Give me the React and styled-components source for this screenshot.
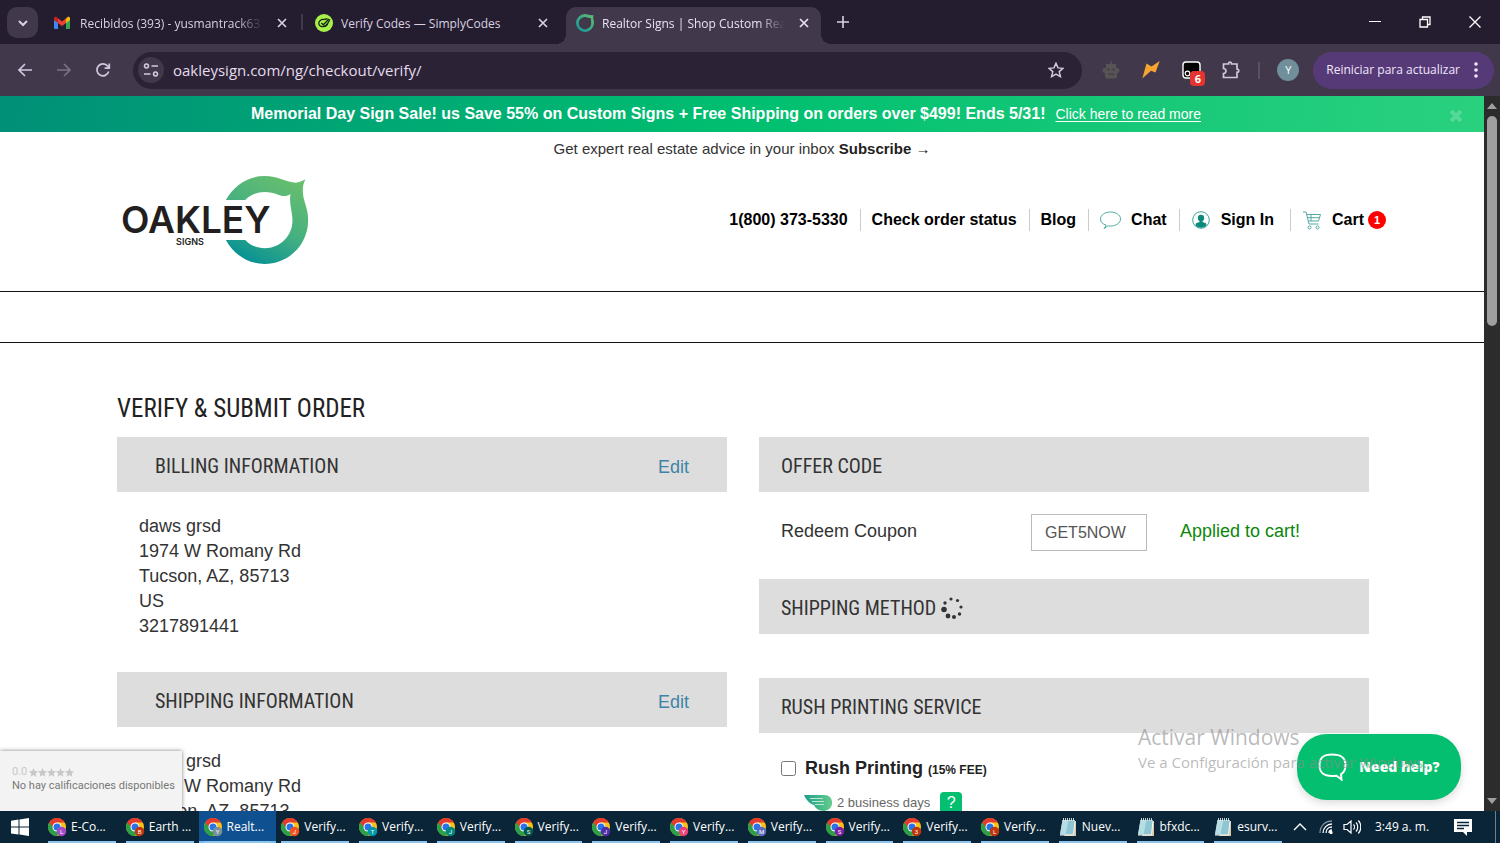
import React from "react";
import styled, { createGlobalStyle, css } from "styled-components";

const GlobalStyle = createGlobalStyle`
  *, *::before, *::after { box-sizing: border-box; }
  body { margin: 0; font-family: "Liberation Sans", Arial, sans-serif; }
  button { font: inherit; color: inherit; background: none; border: 0; padding: 0; cursor: pointer; }
  h1, h2, p { margin: 0; font-weight: 400; }
  svg { display: block; flex: none; }
`;

const uiFont = `"Open Sans", "Noto Sans", sans-serif`;
const narrowFont = `"Roboto Condensed", "Arial Narrow", "Liberation Sans", sans-serif`;

const Desktop = styled.div`
  position: relative;
  height: 100vh;
  display: flex;
  flex-direction: column;
  overflow: hidden;
`;

/* ---------- browser chrome ---------- */

const TabStrip = styled.div`
  flex: none;
  display: flex;
  align-items: flex-end;
  height: 44px;
  padding-left: 7px;
  background: #241d2f;
  color: #d9d0e2;
  font: 12px/18px ${uiFont};
`;

const TabSearch = styled.button`
  width: 31px;
  height: 31px;
  margin: 0 6px 6px 0;
  display: grid;
  place-items: center;
  border-radius: 10px;
  background: #41384b;
`;

const Tab = styled.div`
  position: relative;
  width: 255px;
  height: 37px;
  margin-right: 6px;
  padding: 0 10px 5px;
  display: flex;
  align-items: center;
  gap: 8px;
  border-radius: 10px 10px 0 0;
  ${(p) => p.$active && css`
    background: #41384b;
    color: #eae2f2;
    &::before, &::after {
      content: "";
      position: absolute;
      bottom: 0;
      width: 10px;
      height: 10px;
    }
    &::before { left: -10px; background: radial-gradient(circle at 0 0, transparent 10px, #41384b 10px); }
    &::after { right: -10px; background: radial-gradient(circle at 100% 0, transparent 10px, #41384b 10px); }
  `}
  ${(p) => p.$divided && css`
    &::after {
      content: "";
      position: absolute;
      right: -4px;
      top: 7px;
      width: 2px;
      height: 16px;
      background: #41384b;
    }
  `}
`;

const TabTitle = styled.span`
  flex: 1;
  padding-top: 1px;
  overflow: hidden;
  white-space: nowrap;
  mask-image: ${(p) => (p.$fade ? "linear-gradient(to right, #000 85%, transparent)" : "none")};
`;

const CloseTab = styled.button`
  width: 14px;
  height: 14px;
  margin-left: 4px;
  display: grid;
  place-items: center;
`;

const NewTab = styled.button`
  width: 32px;
  height: 44px;
  display: grid;
  place-items: center;
`;

const WindowButtons = styled.div`
  display: flex;
  margin-left: auto;
`;

const WindowButton = styled.button`
  width: 50px;
  height: 44px;
  display: grid;
  place-items: center;
  color: #fff;
`;

const Toolbar = styled.div`
  flex: none;
  display: flex;
  align-items: center;
  height: 52px;
  padding: 0 6px 0 5px;
  background: #41384b;
  color: #d3c6df;
`;

const NavButton = styled.button`
  width: 39px;
  height: 36px;
  display: grid;
  place-items: center;
  opacity: ${(p) => (p.disabled ? 0.4 : 1)};
  color: inherit;
`;

const AddressBar = styled.div`
  flex: 1;
  height: 37px;
  margin-left: 11px;
  padding: 0 18px 0 5px;
  display: flex;
  align-items: center;
  gap: 9px;
  border-radius: 19px;
  background: #2b2236;
`;

const SiteInfo = styled.button`
  width: 26px;
  height: 26px;
  display: grid;
  place-items: center;
  border-radius: 50%;
  background: #41384b;
`;

const AddressInput = styled.input`
  flex: 1;
  min-width: 0;
  padding: 0;
  border: 0;
  outline: 0;
  background: transparent;
  color: #e5dcec;
  font: 15px/20px ${uiFont};
`;

const Extensions = styled.div`
  display: flex;
  align-items: center;
  margin-left: 9px;
  padding-right: 7px;
`;

const Extension = styled.button`
  position: relative;
  width: 40px;
  height: 36px;
  display: grid;
  place-items: center;
`;

const ExtensionCount = styled.span`
  position: absolute;
  right: 6px;
  bottom: 2px;
  width: 15px;
  height: 15px;
  border-radius: 4px;
  background: #e5332f;
  color: #fff;
  font: 700 11px/15px ${uiFont};
  text-align: center;
`;

const ToolbarDivider = styled.span`
  width: 2px;
  height: 17px;
  background: #5b5067;
`;

const Avatar = styled.button`
  width: 22px;
  height: 22px;
  margin: 0 14px 0 17px;
  border-radius: 50%;
  background: #708f9b;
  color: #fff;
  font: 11px/22px ${uiFont};
`;

const RestartButton = styled.button`
  height: 37px;
  padding: 0 16px 0 13px;
  display: flex;
  align-items: center;
  gap: 14px;
  border-radius: 19px;
  background: #563a78;
  color: #f1e6fb;
  font: 12px/18px ${uiFont};
  white-space: nowrap;
`;

/* ---------- web page ---------- */

const Viewport = styled.div`
  flex: 1;
  min-height: 0;
  display: flex;
  position: relative;
`;

const Page = styled.div`
  flex: 1;
  min-width: 0;
  position: relative;
  overflow: hidden;
  background: #fff;
  color: #333;
`;

const ScrollTrack = styled.div`
  width: 16px;
  padding: 7px 0;
  display: flex;
  flex-direction: column;
  align-items: center;
  background: #2c2c2c;
  color: #9f9f9f;
`;

const ScrollThumb = styled.div`
  width: 10px;
  height: 30%;
  margin: 7px 0 auto;
  border-radius: 5px;
  background: #9f9f9f;
`;

const Banner = styled.div`
  position: relative;
  height: 36px;
  display: flex;
  align-items: center;
  justify-content: center;
  gap: 10px;
  padding-right: 32px;
  background: linear-gradient(100deg, #008f78 0%, #00bf70 50%, #2ad17f 100%);
  color: #fff;
  font-size: 16px;
  white-space: nowrap;
`;

const BannerLink = styled.a`
  color: #fff;
  font-size: 14px;
  text-underline-offset: 2px;
`;

const BannerClose = styled.button`
  position: absolute;
  right: 22px;
  top: 14px;
  color: #55d998;
`;

const Subscribe = styled.p`
  padding-top: 7px;
  font-size: 15px;
  line-height: 20px;
  text-align: center;
`;

const PlainLink = styled.a`
  color: #222;
  text-decoration: none;
`;

const Header = styled.header`
  height: 133px;
  padding: 0 98px 0 120px;
  display: flex;
  align-items: center;
  justify-content: space-between;
  border-bottom: 1px solid #111;
`;

const HomeLink = styled.a`
  padding-bottom: 17px;
`;

const HeaderNav = styled.nav`
  display: flex;
  align-items: center;
  padding-bottom: 10px;
`;

const HeaderLink = styled.a`
  height: 22px;
  padding: 0 ${(p) => (p.$wide ? "16px" : "12px")} 0 11px;
  display: flex;
  align-items: center;
  gap: 10px;
  border-left: 1px solid #ccc;
  color: #000;
  font-size: 16px;
  font-weight: 700;
  text-decoration: none;
  white-space: nowrap;
  &:first-child { border-left: 0; }
  &:last-child { padding-right: 0; }
`;

const CartLabel = styled.span`
  display: flex;
  align-items: center;
  gap: 4px;
`;

const CartCount = styled.span`
  width: 18px;
  height: 18px;
  border-radius: 50%;
  background: #f00;
  color: #fff;
  font-size: 11px;
  line-height: 18px;
  text-align: center;
`;

const CategoryStrip = styled.div`
  height: 51px;
  border-bottom: 1px solid #111;
`;

const Main = styled.main`
  padding: 51px 115px 0 117px;
`;

const PageTitle = styled.h1`
  margin-bottom: 13px;
  color: #222;
  font: 25px/30px ${narrowFont};
`;

const Columns = styled.div`
  display: grid;
  grid-template-columns: 1fr 1fr;
  gap: 32px;
`;

const SectionBar = styled.div`
  height: 55px;
  padding: ${(p) => (p.$inset ? "15px 38px 0" : "15px 22px 0")};
  display: flex;
  align-items: baseline;
  background: #ddd;
`;

const SectionTitle = styled.h2`
  display: flex;
  align-items: center;
  gap: 5px;
  font: 20px/28px ${narrowFont};
`;

const EditLink = styled.a`
  margin-left: auto;
  color: #3f84a8;
  font-size: 18px;
  line-height: 25px;
  text-decoration: none;
`;

const Address = styled.address`
  padding: 22px 22px 33px;
  font-style: normal;
  font-size: 18px;
  line-height: 25px;
`;

const CouponRow = styled.div`
  height: 87px;
  padding: 22px 22px 0;
  display: flex;
  align-items: flex-start;
  font-size: 18px;
  line-height: 34px;
`;

const CouponLabel = styled.label`
  width: 250px;
`;

const CouponInput = styled.input`
  width: 116px;
  height: 37px;
  margin-right: 33px;
  padding: 0 13px;
  border: 1px solid #bbb;
  color: #555;
  font: 16px "Liberation Sans", Arial, sans-serif;
`;

const Applied = styled.span`
  color: #0b870b;
`;

const Spacer = styled.div`
  height: 44px;
`;

const RushBlock = styled.div`
  padding: 23px 22px 0;
`;

const RushOption = styled.label`
  display: flex;
  align-items: baseline;
  gap: 5px;
  color: #222;
  font-size: 18px;
  font-weight: 700;
  line-height: 25px;
`;

const Checkbox = styled.input`
  align-self: center;
  width: 15px;
  height: 15px;
  margin: 0 4px 2px 0;
`;

const Fee = styled.span`
  font-size: 12px;
`;

const RushTime = styled.div`
  padding: 9px 0 0 23px;
  display: flex;
  align-items: center;
  gap: 5px;
  color: #666;
  font-size: 13px;
  line-height: 22px;
`;

const HelpTip = styled.button`
  width: 22px;
  height: 22px;
  margin-left: 5px;
  border-radius: 4px;
  background: #04bf6f;
  color: #fff;
  font-size: 16px;
  line-height: 22px;
`;

const HelpButton = styled.button`
  position: absolute;
  right: 23px;
  bottom: 11px;
  width: 164px;
  height: 66px;
  display: flex;
  align-items: center;
  justify-content: center;
  gap: 12px;
  border-radius: 30px;
  background: #04bf6f;
  box-shadow: 0 3px 8px rgba(0, 0, 0, 0.15);
  color: #fff;
  font: 800 14px/20px "Open Sans", sans-serif;
`;

const RatingCard = styled.div`
  position: absolute;
  left: 0;
  bottom: 0;
  height: 60px;
  padding: 14px 7px 0 12px;
  background: #f3f3f3;
  box-shadow: 0 0 4px rgba(0, 0, 0, 0.5);
  color: #777;
  font: 11px/14px Roboto, sans-serif;
  white-space: nowrap;
`;

const Score = styled.div`
  color: #c8c8c8;
  display: flex;
  align-items: center;
  gap: 2px;
`;

const Stars = styled.span`
  display: flex;
`;

const Watermark = styled.div`
  position: absolute;
  right: 73px;
  bottom: 70px;
  color: rgba(140, 140, 140, 0.6);
  font: 15px/22px ${uiFont};
  pointer-events: none;
`;

const WatermarkTitle = styled.div`
  font-size: 21px;
  line-height: 28px;
`;

/* ---------- task bar ---------- */

const TaskBar = styled.footer`
  flex: none;
  display: flex;
  height: 32px;
  background: #0a2538;
  color: #fff;
  font: 12px/18px ${uiFont};
`;

const StartButton = styled.button`
  width: 43px;
  padding-right: 3px;
  display: grid;
  place-items: center;
`;

const TaskList = styled.div`
  flex: 1;
  min-width: 0;
  display: flex;
`;

const Task = styled.button`
  flex: 1 1 0;
  min-width: 0;
  padding: 0 5px;
  display: flex;
  background: ${(p) => (p.$active ? "#0f5190" : "none")};
  box-shadow: ${(p) => (p.$active ? "inset 0 -2px #76b9ed" : "none")};
`;

const TaskInner = styled.span`
  flex: 1;
  min-width: 0;
  height: 32px;
  padding-top: 2px;
  display: flex;
  align-items: center;
  gap: 4px;
  border-bottom: 2px solid #8cc4ee;
  white-space: nowrap;
`;

const Tray = styled.div`
  width: 213px;
  display: flex;
  align-items: center;
`;

const TrayButton = styled.button`
  width: 26px;
  height: 32px;
  display: grid;
  place-items: center;
`;

const Clock = styled.span`
  width: 68px;
  padding-left: 10px;
  white-space: nowrap;
`;

const Notifications = styled.button`
  width: 48px;
  height: 32px;
  margin-left: 6px;
  display: grid;
  place-items: center;
`;

const ShowDesktop = styled.button`
  width: 5px;
  height: 32px;
  margin-left: auto;
  border-left: 1px solid #6c8090;
`;

/* ---------- drawings ---------- */

const Line = ({ size = 16, w = 2, d, box = 16, ...rest }) => (
  <svg width={size} height={size} viewBox={`0 0 ${box} ${box}`} fill="none" stroke="currentColor" strokeWidth={w} {...rest}>
    <path d={d} />
  </svg>
);

const Cross = () => <Line size={10} box={10} w={1.7} d="M1 1l8 8M9 1l-8 8" />;

const GmailIcon = () => (
  <svg width="18" height="18" viewBox="0 0 18 18">
    <path d="M0 4v10a1 1 0 0 0 1 1h3V7z" fill="#4285f4" />
    <path d="M12 7v8h3a1 1 0 0 0 1-1V4z" fill="#34a853" />
    <path d="M12 4.500V9l4-3V4.500c0-1.700-1.700-2.200-2.800-1.300z" fill="#fbbc04" />
    <path d="M4 9V4.300L8 7.400l4-3.100V9l-4 3z" fill="#ea4335" />
    <path d="M0 4.500V6l4 3V4.300L2.800 3.200C1.700 2.300 0 2.800 0 4.500z" fill="#c5221f" />
  </svg>
);

const SimplyIcon = () => (
  <svg width="18" height="18" viewBox="0 0 18 18">
    <circle cx="9" cy="9" r="9" fill="#a8f04a" />
    <g fill="none" stroke="#15240f" strokeWidth="1.300">
      <path d="M9.500 5.500C6 5 3.500 7 3.800 9.800c.3 2.700 3.600 3.500 5.700 2.400 2.300-1.200 4.200-3.800 5.300-6.800" />
      <path d="M6.300 9l2 1.800L14 5M9.500 5.500l3-.8M12.600 9.500c-.3 1.500-1.800 2.700-3.300 3" />
    </g>
  </svg>
);

const ringPath =
  "M378 120C402 76 446 48 494 48C535 48 560 68 588 68C598 68 607 63 617 58C609 73 607 88 611 112C616 135 625 150 625 181C625 254 567 312 494 312C446 312 402 285 378 240H436C451 256 472 265 494 265C541 265 578 228 578 181C578 155 567 132 572 102C560 111 548 109 535 104C522 99 510 96 494 96C472 96 451 105 436 120Z";

const OakleyLogo = () => (
  <svg width="190" height="94" viewBox="0 0 190 94" role="img" aria-label="Oakley Signs">
    <defs>
      <linearGradient id="leaf" x1="0.200" y1="1" x2="0.700" y2="0">
        <stop offset="0" stopColor="#008e96" />
        <stop offset="0.500" stopColor="#45b080" />
        <stop offset="1" stopColor="#66be6e" />
      </linearGradient>
    </defs>
    <path d={ringPath} transform="scale(0.333) translate(-60 -30)" fill="url(#leaf)" />
    <text x="1" y="63" fontFamily="Inter" fontWeight="600" fontSize="37" fill="#231f20">OAKLEY</text>
    <text x="70" y="75" textAnchor="middle" fontFamily="Inter" fontWeight="600" fontSize="9" fill="#231f20">SIGNS</text>
  </svg>
);

const OakleyIcon = () => (
  <svg width="18" height="18" viewBox="0 0 18 18">
    <defs>
      <linearGradient id="ring" x1="0" y1="1" x2="1" y2="0">
        <stop offset="0" stopColor="#0d95a0" />
        <stop offset="1" stopColor="#66be6e" />
      </linearGradient>
    </defs>
    <path
      d="M9 0c3 0 5 2 8.500 1-1 3 .5 5 .5 8a9 9 0 1 1-9-9zm0 3a6.200 6.200 0 1 0 6.200 6.200c0-2-.5-3.500-.4-5.200C12.500 4.300 11 3 9 3z"
      fill="url(#ring)"
      fillRule="evenodd"
    />
  </svg>
);

const ChromeIcon = ({ color, letter }) => (
  <svg width="19" height="19" viewBox="0 0 19 19">
    <circle cx="9" cy="9" r="9" fill="#fbc116" />
    <path d="M9 9L1.200 4.500A9 9 0 0 0 9 18l4-6.700z" fill="#2c9f48" />
    <path d="M9 9H5L1.200 4.500a9 9 0 0 1 15.600 0H9z" fill="#e33b2e" />
    <circle cx="9" cy="9" r="4.500" fill="#fff" />
    <circle cx="9" cy="9" r="3.500" fill="#2a72e8" />
    <circle cx="13.500" cy="13.500" r="4.700" fill={color} />
    <text x="13.500" y="16" textAnchor="middle" fontSize="6" fontFamily="Roboto" fill="#fff">{letter}</text>
  </svg>
);

const NotepadIcon = () => (
  <svg width="19" height="19" viewBox="0 0 19 19">
    <path d="M14 3h3v15H5z" fill="#d8c9a4" />
    <path d="M3.500 2H16l-1.500 14.500H1z" fill="#8fc6d4" />
    <path d="M3.500 2h6L6.500 16.500H1z" fill="#b7dde5" />
    <path d="M4.500 0v3M6.500 0v3M8.500 0v3M10.500 0v3M12.500 0v3M14.500 0v3" stroke="#dfe9ec" strokeWidth="0.900" />
    <path d="M1 17h13.500L16 3.500" fill="none" stroke="#f4f7f7" />
  </svg>
);

const WindowsLogo = () => (
  <svg width="18" height="18" viewBox="0 0 18 18" fill="#fff">
    <path d="M0 2.700L7.500 1.600v7H0zM8.500 1.500L18 0v8.600H8.500zM0 9.500h7.500v7L0 15.400zM8.500 9.500H18V18l-9.500-1.400z" />
  </svg>
);

const Spinner = () => (
  <svg width="22" height="22" viewBox="0 0 22 22" fill="#333">
    <circle cx="10" cy="2" r="1.600" />
    <circle cx="16.500" cy="3.500" r="1.600" />
    <circle cx="20" cy="10" r="1.600" />
    <circle cx="18.500" cy="17" r="1.700" />
    <circle cx="13" cy="20" r="2" />
    <circle cx="7" cy="19" r="2.400" />
    <circle cx="3" cy="12.500" r="2.800" />
    <circle cx="4" cy="6" r="1.700" />
  </svg>
);

const Wing = () => (
  <svg width="28" height="18" viewBox="0 0 28 18">
    <defs>
      <linearGradient id="wing" x1="0" x2="1">
        <stop offset="0" stopColor="#1c9f8c" />
        <stop offset="1" stopColor="#66cc8c" />
      </linearGradient>
    </defs>
    <path d="M0 1h20c5 0 8 3 8 7a8 8 0 0 1-8 9c-5 0-9-3-10-6C6 10 2 6 0 1z" fill="url(#wing)" />
    <path d="M6 4.500h13M8 7.500h12M11 10.500h9" stroke="#b9ead1" />
  </svg>
);

const chromeTasks = [
  ["E-Co...", "#a64ac9", "L"],
  ["Earth ...", "#bf360c", "B"],
  ["Realt...", "#78909c", "Y"],
  ["Verify...", "#f4511e", "J"],
  ["Verify...", "#0097a7", "T"],
  ["Verify...", "#00897b", "J"],
  ["Verify...", "#00574b", "S"],
  ["Verify...", "#512da8", "J"],
  ["Verify...", "#ec407a", "Y"],
  ["Verify...", "#5c6bc0", "M"],
  ["Verify...", "#7b1fa2", "S"],
  ["Verify...", "#bf360c", "3"],
  ["Verify...", "#bf360c", "L"],
];

const noteTasks = ["Nuev...", "bfxdc...", "esurv..."];

function BrowserTabs() {
  return (
    <TabStrip>
      <TabSearch aria-label="Buscar pestañas">
        <Line size={10} box={10} w={2} d="M1 3l4 4 4-4" />
      </TabSearch>
      <Tab $divided>
        <GmailIcon />
        <TabTitle $fade>Recibidos (393) - yusmantrack63</TabTitle>
        <CloseTab aria-label="Cerrar"><Cross /></CloseTab>
      </Tab>
      <Tab>
        <SimplyIcon />
        <TabTitle>Verify Codes — SimplyCodes</TabTitle>
        <CloseTab aria-label="Cerrar"><Cross /></CloseTab>
      </Tab>
      <Tab $active>
        <OakleyIcon />
        <TabTitle $fade>Realtor Signs | Shop Custom Real</TabTitle>
        <CloseTab aria-label="Cerrar"><Cross /></CloseTab>
      </Tab>
      <NewTab aria-label="Nueva pestaña"><Line size={12} box={12} w={1.6} d="M6 0v12M0 6h12" /></NewTab>
      <WindowButtons>
        <WindowButton aria-label="Minimizar"><Line size={12} box={12} w={1} d="M0 5.500h12" /></WindowButton>
        <WindowButton aria-label="Restaurar"><Line size={12} box={12} w={1.300} d="M1 3.500h7.500V11H1zM3.500 3.500V1H11v7.500H8.500" /></WindowButton>
        <WindowButton aria-label="Cerrar ventana"><Line size={12} box={12} w={1.300} d="M.5.5l11 11M11.500.5l-11 11" /></WindowButton>
      </WindowButtons>
    </TabStrip>
  );
}

function BrowserToolbar() {
  return (
    <Toolbar>
      <NavButton aria-label="Atrás"><Line d="M15 8H2M8 2L2 8l6 6" w={1.700} /></NavButton>
      <NavButton aria-label="Adelante" disabled><Line d="M1 8h13M8 2l6 6-6 6" w={1.700} /></NavButton>
      <NavButton aria-label="Recargar"><Line d="M13.700 9.500A6 6 0 1 1 12.800 4.300L14.200 6M14.300 1.500V6.200H9.600" w={1.700} /></NavButton>
      <AddressBar>
        <SiteInfo aria-label="Información del sitio">
          <Line w={1.600} d="M8.500 4H15M1 12h6.500M3.500 2a2 2 0 1 0 .01 0zM12.500 10a2 2 0 1 0 .01 0z" />
        </SiteInfo>
        <AddressInput aria-label="Dirección" defaultValue="oakleysign.com/ng/checkout/verify/" />
        <Line w={1.500} d="M8 1.200l2 4.700 5 .4-3.800 3.300 1.200 5L8 12l-4.400 2.600 1.200-5L1 6.300l5-.4z" />
      </AddressBar>
      <Extensions>
        <Extension aria-label="Robot">
          <svg width="18" height="18" viewBox="0 0 18 18" fill="#585455">
            <path d="M8.300 0h1.400v3H14v4h1a2.500 2.500 0 0 1 0 5v3.500a2 2 0 0 1-2 2H5a2 2 0 0 1-2-2V12a2.500 2.500 0 0 1 0-5h1V3h4.300z" />
            <path d="M5.500 7.500h2v2h-2zM10.500 7.500h2v2h-2zM6 12.500h6v1.200H6z" fill="#41384b" />
          </svg>
        </Extension>
        <Extension aria-label="Rayo">
          <svg width="18" height="18" viewBox="0 0 18 18" fill="#f7a531">
            <path d="M4.500 2.500l5 3L17.700 0l-4.200 11.500L9 9.800.3 17.500z" />
          </svg>
        </Extension>
        <Extension aria-label="Monitor">
          <svg width="19" height="18" viewBox="0 0 19 18">
            <rect x="1" y="1" width="17" height="16" rx="3" fill="#000" stroke="#fff" strokeWidth="1.400" />
            <circle cx="5.500" cy="12.500" r="2.300" fill="none" stroke="#fff" strokeWidth="1.200" />
          </svg>
          <ExtensionCount>6</ExtensionCount>
        </Extension>
        <Extension aria-label="Extensiones">
          <Line size={18} box={18} w={1.700} d="M1.500 3h5c-.3-2.500 3.300-2.500 3 0H15v5c2.300 0 2.300 3.300 0 3.300V16.500H1.500v-4c3.300 0 3.300-5 0-5z" />
        </Extension>
      </Extensions>
      <ToolbarDivider />
      <Avatar>Y</Avatar>
      <RestartButton>
        Reiniciar para actualizar
        <svg width="4" height="16" viewBox="0 0 4 16" fill="currentColor">
          <circle cx="2" cy="2" r="1.800" /><circle cx="2" cy="8" r="1.800" /><circle cx="2" cy="14" r="1.800" />
        </svg>
      </RestartButton>
    </Toolbar>
  );
}

function SiteHeader() {
  return (
    <>
      <Banner>
        <strong>Memorial Day Sign Sale! us Save 55% on Custom Signs + Free Shipping on orders over $499! Ends 5/31!</strong>
        <BannerLink href="#sale">Click here to read more</BannerLink>
        <BannerClose aria-label="Close"><Line size={12} box={12} w={4} d="M1 1l10 10M11 1L1 11" /></BannerClose>
      </Banner>
      <Subscribe>
        Get expert real estate advice in your inbox{" "}
        <PlainLink href="#subscribe"><b>Subscribe</b> →</PlainLink>
      </Subscribe>
      <Header>
        <HomeLink href="#home"><OakleyLogo /></HomeLink>
        <HeaderNav>
          <HeaderLink href="#call">1(800) 373-5330</HeaderLink>
          <HeaderLink href="#status">Check order status</HeaderLink>
          <HeaderLink href="#blog">Blog</HeaderLink>
          <HeaderLink href="#chat">
            <svg width="21" height="18" viewBox="0 0 21 18" fill="none" stroke="#3fa396" strokeWidth="0.900">
              <path d="M6 14C2.500 13 .5 11 .5 8.200.5 4 5 1 10.500 1s10 3 10 7-4.500 7-10 7c-1 0-1.500 0-2.300-.2L4 17.500c1-1 1.800-2 2-3.500z" />
            </svg>
            Chat
          </HeaderLink>
          <HeaderLink href="#signin" $wide>
            <svg width="20" height="18" viewBox="0 0 20 18">
              <circle cx="10" cy="9" r="8.300" fill="#fff" stroke="#3fa396" />
              <circle cx="10" cy="7" r="3.200" fill="#0c8a7b" />
              <path d="M8.500 9h3v2l3.500 1.200c.5.800.5 1.600.3 2.300-3 3-7.600 3-10.600 0-.2-.7-.2-1.500.3-2.300L8.500 11z" fill="#0c8a7b" />
            </svg>
            Sign In
          </HeaderLink>
          <HeaderLink href="#cart">
            <svg width="20" height="19" viewBox="0 0 20 19" fill="none" stroke="#3fa396" strokeWidth="0.900">
              <path d="M1 1h3l3 12h9.500M4.600 3.500H18.500L16.500 10H6.300M5.500 6.700h12M9 3.500V10" />
              <circle cx="7.500" cy="16.500" r="1.500" /><circle cx="15.500" cy="16.500" r="1.500" />
            </svg>
            <CartLabel>Cart <CartCount>1</CartCount></CartLabel>
          </HeaderLink>
        </HeaderNav>
      </Header>
      <CategoryStrip />
    </>
  );
}

function AddressSection({ title }) {
  return (
    <section>
      <SectionBar $inset>
        <SectionTitle>{title}</SectionTitle>
        <EditLink href="#edit">Edit</EditLink>
      </SectionBar>
      <Address>
        daws grsd<br />1974 W Romany Rd<br />Tucson, AZ, 85713<br />US<br />3217891441
      </Address>
    </section>
  );
}

function Checkout() {
  return (
    <Main>
      <PageTitle>VERIFY &amp; SUBMIT ORDER</PageTitle>
      <Columns>
        <div>
          <AddressSection title="BILLING INFORMATION" />
          <AddressSection title="SHIPPING INFORMATION" />
        </div>
        <div>
          <SectionBar><SectionTitle>OFFER CODE</SectionTitle></SectionBar>
          <CouponRow>
            <CouponLabel htmlFor="coupon">Redeem Coupon</CouponLabel>
            <CouponInput id="coupon" defaultValue="GET5NOW" />
            <Applied>Applied to cart!</Applied>
          </CouponRow>
          <SectionBar><SectionTitle>SHIPPING METHOD<Spinner /></SectionTitle></SectionBar>
          <Spacer />
          <SectionBar><SectionTitle>RUSH PRINTING SERVICE</SectionTitle></SectionBar>
          <RushBlock>
            <RushOption>
              <Checkbox type="checkbox" />
              Rush Printing <Fee>(15% FEE)</Fee>
            </RushOption>
            <RushTime>
              <Wing />
              2 business days
              <HelpTip>?</HelpTip>
            </RushTime>
          </RushBlock>
        </div>
      </Columns>
    </Main>
  );
}

function TaskBarRow() {
  return (
    <TaskBar>
      <StartButton aria-label="Inicio"><WindowsLogo /></StartButton>
      <TaskList>
        {chromeTasks.map(([name, color, letter], i) => (
          <Task key={i} $active={i === 2}>
            <TaskInner><ChromeIcon color={color} letter={letter} />{name}</TaskInner>
          </Task>
        ))}
        {noteTasks.map((name) => (
          <Task key={name}><TaskInner><NotepadIcon />{name}</TaskInner></Task>
        ))}
      </TaskList>
      <Tray>
        <TrayButton aria-label="Mostrar iconos ocultos"><Line size={14} box={14} w={1.400} d="M1 10l6-6 6 6" /></TrayButton>
        <TrayButton aria-label="Red">
          <svg width="14" height="14" viewBox="0 0 14 14" fill="none" stroke="#fff" strokeWidth="1.300">
            <path d="M1 13C1 6 6 1 13 1" opacity="0.500" /><path d="M4 13c0-5 4-9 9-9M7 13c0-3.500 2.500-6 6-6M10 13c0-2 1-3 3-3" />
            <circle cx="12" cy="12.500" r="1" fill="#fff" />
          </svg>
        </TrayButton>
        <TrayButton aria-label="Volumen">
          <Line size={18} box={18} w={1.200} d="M1 6.500h3L8 3v12l-4-3.500H1zM10.500 6.500c1.300 1.300 1.300 3.700 0 5M13 4.500c2.300 2.300 2.300 6.700 0 9M15.300 2.500c3.300 3.300 3.300 9.700 0 13" />
        </TrayButton>
        <Clock>3:49 a. m.</Clock>
        <Notifications aria-label="Notificaciones">
          <svg width="18" height="17" viewBox="0 0 18 17">
            <path d="M0 0h18v13h-5v4l-4-4H0z" fill="#fff" />
            <path d="M3 3.500h12M3 6.500h12M3 9.500h7" stroke="#0a2538" strokeWidth="1.300" />
          </svg>
        </Notifications>
        <ShowDesktop aria-label="Mostrar escritorio" />
      </Tray>
    </TaskBar>
  );
}

const star = "M5 0l1.500 3.300 3.500.4-2.600 2.400.7 3.600L5 7.900 1.900 9.700l.7-3.600L0 3.700l3.500-.4z";

export default function App() {
  return (
    <Desktop>
      <GlobalStyle />
      <BrowserTabs />
      <BrowserToolbar />
      <Viewport>
        <Page>
          <SiteHeader />
          <Checkout />
          <RatingCard>
            <Score>
              0.0
              <Stars>
                {[0, 1, 2, 3, 4].map((n) => (
                  <svg key={n} width="9" height="9" viewBox="0 0 10 10" fill="currentColor"><path d={star} /></svg>
                ))}
              </Stars>
            </Score>
            No hay calificaciones disponibles
          </RatingCard>
          <HelpButton>
            <svg width="29" height="28" viewBox="0 0 29 28" fill="none" stroke="#fff" strokeWidth="2">
              <path d="M14 1.500C5 1.500 1.500 4.500 1.500 12S5 23 14 23c1.500 0 3 0 4.500-.2L23.500 26.500 23 21.300c3-1.700 4.500-4.500 4.500-9.300C27.500 4.500 23.500 1.500 14 1.500z" />
            </svg>
            Need help?
          </HelpButton>
        </Page>
        <ScrollTrack>
          <svg width="10" height="6" viewBox="0 0 10 6" fill="currentColor"><path d="M5 0l5 6H0z" /></svg>
          <ScrollThumb />
          <svg width="10" height="6" viewBox="0 0 10 6" fill="currentColor"><path d="M0 0h10L5 6z" /></svg>
        </ScrollTrack>
      </Viewport>
      <TaskBarRow />
      <Watermark>
        <WatermarkTitle>Activar Windows</WatermarkTitle>
        Ve a Configuración para activar Windows.
      </Watermark>
    </Desktop>
  );
}
